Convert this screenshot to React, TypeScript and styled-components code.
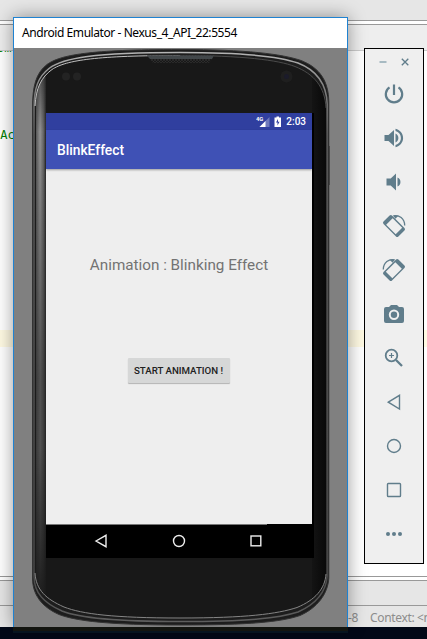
import React from "react";
import styled, { createGlobalStyle } from "styled-components";

const GlobalStyle = createGlobalStyle`
  * { box-sizing: border-box; }
  body { margin: 0; overflow: hidden; }
`;

const Desktop = styled.main`
  position: relative;
  width: 427px;
  height: 639px;
  overflow: hidden;
  background: #020817;
`;

/* ---- editor behind the emulator ---- */
const Editor = styled.div`
  display: flex;
  flex-direction: column;
  height: 627px;
  background: #fff;
`;

const Strip = styled.div<{ $h: number; $bg: string; $line?: string }>`
  flex: none;
  height: ${(p) => p.$h}px;
  background: ${(p) => p.$bg};
  border-bottom: ${(p) => (p.$line ? `1px solid ${p.$line}` : "none")};
`;

const CodeArea = styled.div`
  flex: 1;
  display: flex;
  flex-direction: column;
  overflow: hidden;
  background: #fff;
`;

const CodeLine = styled.div<{ $gap: number; $shift: number }>`
  flex: none;
  height: 17px;
  margin-top: ${(p) => p.$gap}px;
  margin-left: ${(p) => p.$shift}px;
  color: #008000;
  font: 12px/17px "DejaVu Sans Mono", monospace;
  white-space: pre;
`;

const CaretLine = styled.div`
  flex: none;
  height: 17px;
  margin-top: 186px;
  background: #fffae3;
`;

const StatusLine = styled.div`
  flex: none;
  display: flex;
  gap: 12px;
  height: 21px;
  padding-left: 348px;
  background: #e6e6e6;
  color: #8c8c8c;
  font: 12px/23px "Noto Sans", sans-serif;
  letter-spacing: -0.35px;
  white-space: nowrap;
`;

/* ---- emulator window ---- */
const Window = styled.section`
  position: absolute;
  left: 13px;
  top: 17px;
  width: 335px;
  height: 610px;
  border: 1px solid #1f82d1;
  border-bottom: 0;
  background: #808080;
  box-shadow: 0 0 17px rgba(0, 0, 0, 0.4);
`;

const WindowTitle = styled.header`
  height: 30px;
  padding-left: 8px;
  background: #fff;
  color: #000;
  font: 12px/30px "Noto Sans", sans-serif;
  letter-spacing: -0.43px;
  white-space: nowrap;
`;

const WindowFoot = styled.div`
  position: absolute;
  left: 13px;
  top: 627px;
  width: 335px;
  height: 6px;
  background: linear-gradient(#131510 0 4px, #061420 4px);
`;

const Device = styled.div`
  position: relative;
  height: 579px;
  padding: 65px 0 0 32px;
`;

const Shell = styled.svg`
  position: absolute;
  left: 0;
  top: 0;
`;

const Screen = styled.div`
  position: relative;
  display: flex;
  flex-direction: column;
  width: 268px;
  height: 445px;
  background: #000;
  font-family: Roboto, sans-serif;
`;

const StatusBar = styled.div`
  display: flex;
  align-items: center;
  justify-content: flex-end;
  width: 266px;
  height: 17px;
  padding-right: 6px;
  background: #303f9f;
  color: #fff;
  font-size: 10px;
  font-weight: 500;
  line-height: 17px;
`;

const Clock = styled.span`
  margin-left: 4px;
`;

const AppBar = styled.div`
  position: relative;
  width: 266px;
  height: 39px;
  padding-left: 11px;
  background: #3f51b5;
  box-shadow: 0 1px 2px rgba(0, 0, 0, 0.35);
  color: #fff;
  font-size: 13.8px;
  font-weight: 500;
  line-height: 41px;
`;

const AppBody = styled.div`
  display: flex;
  flex-direction: column;
  align-items: center;
  width: 266px;
  height: 355px;
  padding-top: 86px;
  background: #eee;
`;

const Message = styled.div`
  height: 20px;
  color: #737373;
  font-size: 15.25px;
  line-height: 20px;
  white-space: nowrap;
`;

const StartButton = styled.button`
  width: 102px;
  height: 25px;
  margin: 83px 1px 0 0;
  padding: 0;
  border: 0;
  border-radius: 1px;
  background: #d6d7d7;
  box-shadow: 0 1px 1px rgba(0, 0, 0, 0.25);
  color: #212121;
  font: 500 9.7px/26px Roboto, sans-serif;
  white-space: nowrap;
`;

const NavBar = styled.div`
  display: flex;
  align-items: center;
  justify-content: space-between;
  height: 34px;
  padding: 0 51px 0 48px;
  background: linear-gradient(#777, #777) 0 0 / 221px 1px no-repeat #000;
`;

/* ---- side toolbar ---- */
const Toolbar = styled.aside`
  position: absolute;
  left: 364px;
  top: 48px;
  display: flex;
  flex-direction: column;
  width: 60px;
  height: 516px;
  border: 1px solid #000;
  background: #efefef;
  color: #607d8b;
`;

const WindowButtons = styled.div`
  display: flex;
  justify-content: center;
  gap: 12px;
  height: 23px;
  padding: 8px 0 0 0;
`;

const Tool = styled.div`
  display: flex;
  align-items: center;
  justify-content: center;
  height: 44px;
`;

const Glyph = ({ d, size = 24, children }: { d?: string; size?: number; children?: React.ReactNode }) => (
  <svg width={size} height={size} viewBox="0 0 24 24" fill="currentColor">
    {d && <path d={d} />}
    {children}
  </svg>
);

const edge =
  "M18.5 60 C18.500 38 22 25 33 16.500 C46 7 75 1.500 166 1.500 C232 1.500 268 6 287 12.500 C306 20 314.500 33 314.800 54 V530 C314 546 303 560 286 567.500 C267 574 235 577 166 577 C95 577 62 573 45 566.500 C28 559 18.500 547 18.500 530 Z";
const rim =
  "M20 60 C20 40 24 29 35 20.500 C49 10 80 4.500 166 4.500 C230 4.500 266 8.500 284 15 C302 22 312.500 36 313.200 56 V528 C312 544 302 556 284 564 C265 570 235 573.500 166 573.500 C98 573.500 65 570 48 563 C30 555 20 545 20 528 Z";
const face =
  "M21 58 C22 40 27 29.500 38 21.500 C52 12 84 7.500 166 7.500 C228 7.500 264 12 281 18.500 C300 26 311 39 312 60 V526 C311 541 301 552 283 559.500 C263 566 232 570 166 570 C100 570 68 566 50 559 C32 551 22 542 21 525 Z";

const PhoneShell = () => (
  <Shell width="333" height="579" viewBox="0 0 333 579" fill="none">
    <defs>
      <linearGradient id="side" x1="20" x2="33" y1="0" y2="0" gradientUnits="userSpaceOnUse">
        <stop offset="0" stopColor="#292929" />
        <stop offset=".25" stopColor="#3c3c3c" />
        <stop offset=".5" stopColor="#4a4a4a" />
        <stop offset=".75" stopColor="#383838" />
        <stop offset="1" stopColor="#1b1b1b" />
      </linearGradient>
      <linearGradient id="glow" x1="21" x2="32" y1="0" y2="0" gradientUnits="userSpaceOnUse">
        <stop offset="0" stopColor="#fff" stopOpacity=".1" />
        <stop offset=".45" stopColor="#fff" stopOpacity=".4" />
        <stop offset=".8" stopColor="#fff" stopOpacity=".2" />
        <stop offset="1" stopColor="#fff" stopOpacity="0" />
      </linearGradient>
      <linearGradient id="fade" x1="0" x2="0" y1="22" y2="330" gradientUnits="userSpaceOnUse">
        <stop offset="0" stopColor="#fff" stopOpacity="0" />
        <stop offset=".2" stopColor="#fff" stopOpacity="1" />
        <stop offset="1" stopColor="#fff" stopOpacity=".1" />
      </linearGradient>
      <mask id="glowMask"><rect x="18" y="20" width="16" height="540" fill="url(#fade)" /></mask>
      <linearGradient id="shade" x1="0" x2="0" y1="400" y2="550" gradientUnits="userSpaceOnUse">
        <stop offset="0" stopColor="#181818" stopOpacity="0" />
        <stop offset="1" stopColor="#181818" stopOpacity=".9" />
      </linearGradient>
      <linearGradient id="rimTone" x1="0" x2="0" y1="0" y2="579" gradientUnits="userSpaceOnUse">
        <stop offset="0" stopColor="#bababa" />
        <stop offset=".07" stopColor="#808080" />
        <stop offset=".15" stopColor="#5a5a5a" />
        <stop offset=".9" stopColor="#484848" />
        <stop offset="1" stopColor="#606060" />
      </linearGradient>
      <linearGradient id="right" x1="298" x2="313" y1="0" y2="0" gradientUnits="userSpaceOnUse">
        <stop offset="0" stopColor="#141414" />
        <stop offset="1" stopColor="#080808" />
      </linearGradient>
      <pattern id="mesh" width="3" height="3" patternUnits="userSpaceOnUse">
        <rect width="3" height="3" fill="#191919" />
        <path d="M0 0l3 3M3 0L0 3" stroke="#343434" strokeWidth=".6" />
      </pattern>
      <clipPath id="faceClip"><path d={face} /></clipPath>
    </defs>
    <path d={edge} fill="#1d1d1d" stroke="#333" />
    <path d={rim} stroke="url(#rimTone)" strokeWidth="1.500" />
    <path d={face} fill="#181818" />
    <g clipPath="url(#faceClip)">
      <rect x="20" y="20" width="12" height="540" fill="url(#side)" />
      <rect x="20" y="20" width="12" height="540" fill="url(#glow)" mask="url(#glowMask)" />
      <rect x="20" y="400" width="12" height="165" fill="url(#shade)" />
      <path d="M298 20h15v540h-15z" fill="url(#right)" />
    </g>
    <path d="M21 58C22 40 27 29.500 38 21.500C52 12 84 7.500 166 7.500" stroke="#c0c0c0" />
    <path d="M166 7.500C228 7.500 264 12 281 18.500C300 26 311 39 312 60" stroke="#505050" strokeWidth=".9" />
    <path d="M312 526C311 541 301 552 283 559.500C263 566 232 570 166 570C100 570 68 566 50 559C32 551 22 542 21 525" stroke="#858585" />
    <path d="M21.500 58v467" stroke="#1b1b1b" />
    <path d="M315 98v39" stroke="#333" strokeWidth="1.300" />
    <path d="M133 7.500h67l-5 7.500h-56z" fill="url(#mesh)" />
    <path d="M133 7.500h67l-2 3.500h-62z" fill="#42474a" />
    <circle cx="52" cy="28.500" r="4" fill="#232323" />
    <circle cx="63" cy="28.500" r="4" fill="#232323" />
    <circle cx="272.500" cy="28.500" r="6" fill="#1f1f1f" />
    <circle cx="272.500" cy="28.500" r="2.500" fill="#1b1b2a" />
  </Shell>
);

const RotateDevice = () => (
  <>
    <g transform="rotate(-45 12 12)">
      <path
        fillRule="evenodd"
        d="M7.700 1.500h8.600A1.700 1.700 0 0 1 18 3.200v17.600a1.700 1.700 0 0 1-1.700 1.700H7.700A1.700 1.700 0 0 1 6 20.800V3.200A1.700 1.700 0 0 1 7.700 1.500zM7.400 5.500v13.500h9.200v-13.500z"
      />
    </g>
    <path d="M11.500 1.800C17 .6 22.700 4.500 22.700 11.500" fill="none" stroke="currentColor" strokeWidth="1.300" />
    <path d="M11 1.600l5.500-.2-3 3.300z" />
  </>
);

const tools: React.ReactNode[] = [
  <Glyph key="power">
    <g fill="none" stroke="currentColor" strokeWidth="2.200">
      <path d="M12 2.500v10.500M7.500 5.300a8.200 8.200 0 1 0 9 0" />
    </g>
  </Glyph>,
  <Glyph key="up" d="M2.500 9v6h4l5.500 5V4L6.500 9zM13.500 7.500v9c1.700-.8 2.900-2.500 2.900-4.500s-1.200-3.700-2.900-4.500zM13.500 2.800v2.300c3.200.8 5.400 3.600 5.400 6.900s-2.200 6.100-5.400 6.900v2.300c4.400-1 7.600-4.700 7.600-9.200s-3.200-8.200-7.600-9.200z" />,
  <Glyph key="down" d="M4.500 8.500v7h4.200l5.300 5V3.500l-5.300 5zM15.500 7.500v9a4.900 4.900 0 0 0 0-9z" />,
  <Glyph key="left"><RotateDevice /></Glyph>,
  <Glyph key="right">
    <g transform="translate(24) scale(-1 1)"><RotateDevice /></g>
  </Glyph>,
  <Glyph key="camera">
    <path
      fillRule="evenodd"
      d="M9 3h6l2 2h3a2 2 0 0 1 2 2v12a2 2 0 0 1-2 2H4a2 2 0 0 1-2-2V7a2 2 0 0 1 2-2h3zM12 7.500a5.200 5.200 0 1 0 0 10.400 5.200 5.200 0 0 0 0-10.400z"
    />
    <circle cx="12" cy="12.700" r="3.200" />
  </Glyph>,
  <Glyph key="zoom">
    <g fill="none" stroke="currentColor" strokeWidth="1.800">
      <circle cx="9.500" cy="9.500" r="5.800" />
      <path d="M14 14l6 6" strokeWidth="2.300" />
      <path d="M7 9.500h5M9.500 7v5" strokeWidth="1.200" />
    </g>
  </Glyph>,
  <Glyph key="back">
    <path d="M6.300 12.200L17.500 5.300v13.800z" fill="none" stroke="currentColor" strokeWidth="1.400" />
  </Glyph>,
  <Glyph key="home">
    <circle cx="12" cy="12" r="6.500" fill="none" stroke="currentColor" strokeWidth="1.400" />
  </Glyph>,
  <Glyph key="recent">
    <rect x="5.500" y="5.500" width="13" height="13" rx=".8" fill="none" stroke="currentColor" strokeWidth="1.400" />
  </Glyph>,
  <Glyph key="more">
    <circle cx="6" cy="12" r="2" />
    <circle cx="12" cy="12" r="2" />
    <circle cx="18" cy="12" r="2" />
  </Glyph>,
];

export default function App() {
  return (
    <Desktop>
      <GlobalStyle />
      <Editor>
        <Strip $h={21} $bg="#e6e6e6" $line="#999" />
        <Strip $h={4} $bg="#fff" $line="#999" />
        <Strip $h={26} $bg="#eee" $line="#ccc" />
        <CodeArea>
          <CodeLine $gap={-11} $shift={-3}>om.</CodeLine>
          <CodeLine $gap={70} $shift={-7}>nAc</CodeLine>
          <CaretLine />
        </CodeArea>
        <Strip $h={1} $bg="#999" />
        <Strip $h={4} $bg="#fff" $line="#999" />
        <Strip $h={25} $bg="#e6e6e6" $line="#999" />
        <StatusLine>
          <span>-8</span>
          <span>Context: &lt;no context&gt;</span>
        </StatusLine>
      </Editor>

      <Window>
        <WindowTitle>Android Emulator - Nexus_4_API_22:5554</WindowTitle>
        <Device>
          <PhoneShell />
          <Screen>
            <StatusBar>
              <svg width="26" height="14" viewBox="0 0 26 14" fill="#fff">
                <text x="0" y="6" fontSize="5.800" fontWeight="700">4G</text>
                <path d="M13.500 2v10H3.500z" opacity=".3" />
                <path d="M9.500 6v6H3.500z" />
                <path fillRule="evenodd" d="M18.500 2.500h2v-1h2.500v1h2V12h-6.500zM22 4l-2 3.500h1.500v3l2-3.800h-1.500z" />
              </svg>
              <Clock>2:03</Clock>
            </StatusBar>
            <AppBar>BlinkEffect</AppBar>
            <AppBody>
              <Message>Animation : Blinking Effect</Message>
              <StartButton>START ANIMATION !</StartButton>
            </AppBody>
            <NavBar>
              <svg width="14" height="14" viewBox="0 0 14 14" fill="none" stroke="#eee" strokeWidth="1.4">
                <path d="M2 7l10-5.700v11.400z" />
              </svg>
              <svg width="14" height="14" viewBox="0 0 14 14" fill="none" stroke="#eee" strokeWidth="1.4">
                <circle cx="7" cy="7" r="5.500" />
              </svg>
              <svg width="14" height="14" viewBox="0 0 14 14" fill="none" stroke="#eee" strokeWidth="1.4">
                <rect x="2" y="2" width="9.800" height="9.800" />
              </svg>
            </NavBar>
          </Screen>
        </Device>
      </Window>
      <WindowFoot />

      <Toolbar>
        <WindowButtons>
          <svg width="10" height="10" viewBox="0 0 10 10" stroke="#9ab0ba" strokeWidth="1.700">
            <path d="M1.500 5h7" />
          </svg>
          <svg width="10" height="10" viewBox="0 0 10 10" stroke="#607d8b" strokeWidth="1.300">
            <path d="M1.800 1.800l6.500 6.500M8.300 1.800L1.800 8.300" />
          </svg>
        </WindowButtons>
        {tools.map((tool, i) => (
          <Tool key={i}>{tool}</Tool>
        ))}
      </Toolbar>
    </Desktop>
  );
}
